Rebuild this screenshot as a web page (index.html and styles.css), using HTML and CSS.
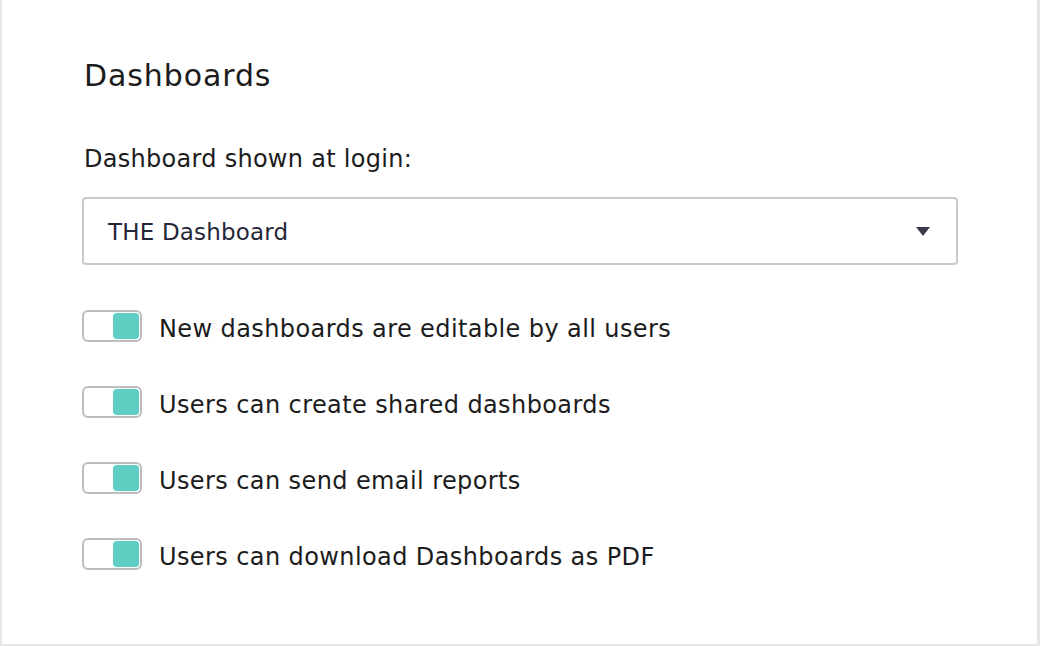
FILE: index.html
```html
<!DOCTYPE html>
<html lang="en">
<head>
    <meta charset="UTF-8">
    <meta name="viewport" content="width=device-width, initial-scale=1.0">
    <title>Dashboard Settings</title>
    <link rel="stylesheet" href="styles.css">
</head>
<body>
    <div class="panel">
        <h2 class="panel-title">Dashboards</h2>

        <label class="field-label" for="login_dashboard">Dashboard shown at login:</label>
        <div class="select-box" id="login_dashboard">
            <span class="select-value">THE Dashboard</span>
            <span class="select-arrow"></span>
        </div>

        <div class="toggle-list">
            <div class="toggle-row">
                <span class="toggle"><span class="knob"></span></span>
                <span class="toggle-text">New dashboards are editable by all users</span>
            </div>
            <div class="toggle-row">
                <span class="toggle"><span class="knob"></span></span>
                <span class="toggle-text">Users can create shared dashboards</span>
            </div>
            <div class="toggle-row">
                <span class="toggle"><span class="knob"></span></span>
                <span class="toggle-text">Users can send email reports</span>
            </div>
            <div class="toggle-row">
                <span class="toggle"><span class="knob"></span></span>
                <span class="toggle-text">Users can download Dashboards as PDF</span>
            </div>
        </div>
    </div>
</body>
</html>
```

FILE: styles.css
```css
body {
    margin: 0;
    font-family: 'DejaVu Sans', 'Liberation Sans', sans-serif;
    color: #1c1c1c;
    background-color: #ffffff;
}

.panel {
    height: 646px;
    box-sizing: border-box;
    border-left: 2px solid #e6e6e6;
    border-right: 3px solid #e6e6e6;
    border-bottom: 2px solid #e6e6e6;
    padding: 58px 80px 0 80px;
}

.panel-title {
    margin: 0;
    font-size: 30px;
    font-weight: 400;
    line-height: 36px;
    letter-spacing: 0.9px;
    padding-left: 2px;
}

.field-label {
    display: block;
    margin-top: 51px;
    font-size: 24px;
    line-height: 28px;
    letter-spacing: 0.28px;
    padding-left: 2px;
}

.select-box {
    margin-top: 24px;
    width: 876px;
    height: 68px;
    box-sizing: border-box;
    border: 2px solid #c9c9c9;
    border-radius: 4px;
    display: flex;
    align-items: center;
    justify-content: space-between;
    padding: 0 26px 0 24px;
}

.select-value {
    font-size: 23px;
    letter-spacing: 0.18px;
    color: #262639;
    padding-top: 2px;
}

.select-arrow {
    width: 0;
    height: 0;
    border-left: 7px solid transparent;
    border-right: 7px solid transparent;
    border-top: 9px solid #3a3a4e;
}

.toggle-list {
    margin-top: 45px;
    display: flex;
    flex-direction: column;
    gap: 44px;
}

.toggle-row {
    display: flex;
    align-items: center;
    gap: 17px;
    height: 32px;
}

.toggle {
    width: 60px;
    height: 32px;
    box-sizing: border-box;
    border: 2px solid #bdbdbd;
    border-radius: 6px;
    display: flex;
    justify-content: flex-end;
    align-items: center;
    padding-right: 1px;
}

.knob {
    width: 26px;
    height: 26px;
    border-radius: 4px;
    background-color: #5ecec3;
}

.toggle-text {
    font-size: 24px;
    line-height: 32px;
    letter-spacing: 0.4px;
    padding-top: 5px;
}
```
